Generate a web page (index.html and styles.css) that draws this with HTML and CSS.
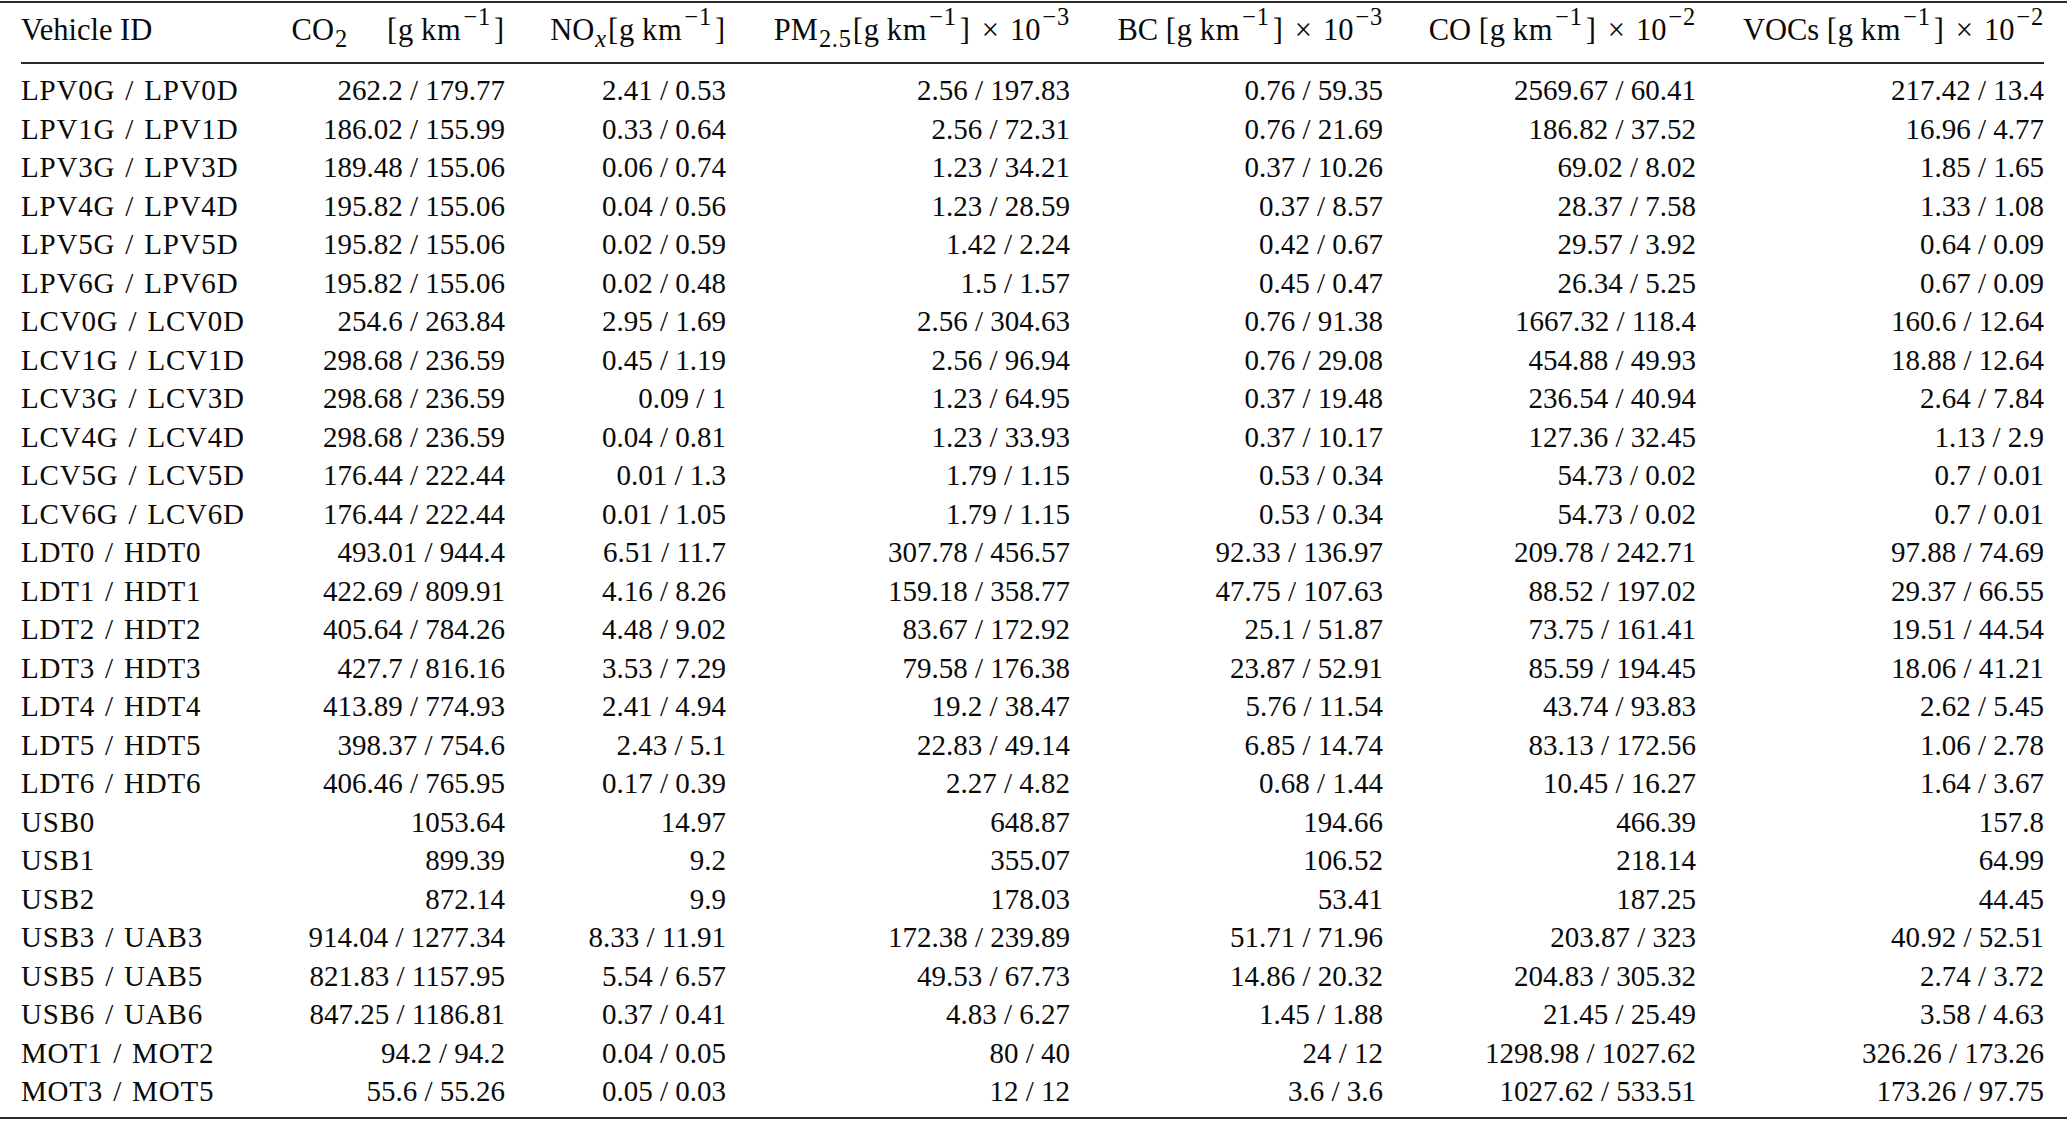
FILE: index.html
```html
<!DOCTYPE html>
<html>
<head>
<meta charset="utf-8">
<link rel="stylesheet" href="styles.css">
</head>
<body>
<div class="sheet">
<table class="emissions">
<colgroup>
<col class="c-id"><col class="c-co2"><col class="c-nox"><col class="c-pm"><col class="c-bc"><col class="c-co"><col class="c-voc">
</colgroup>
<thead>
<tr>
<th class="lft">Vehicle ID</th>
<th>CO<sub>2</sub><span class="gap"></span><span class="u">[g&#8201;km<sup>&minus;1</sup>]</span></th>
<th>NO<sub><i>x</i></sub><span class="u">[g&#8201;km<sup>&minus;1</sup>]</span></th>
<th>PM<sub>2.5</sub><span class="u">[g&#8201;km<sup>&minus;1</sup>]</span><span class="x">&times;</span>10<sup class="end">&minus;3</sup></th>
<th>BC <span class="u">[g&#8201;km<sup>&minus;1</sup>]</span><span class="x">&times;</span>10<sup class="end">&minus;3</sup></th>
<th>CO <span class="u">[g&#8201;km<sup>&minus;1</sup>]</span><span class="x">&times;</span>10<sup class="end">&minus;2</sup></th>
<th>VOCs <span class="u">[g&#8201;km<sup>&minus;1</sup>]</span><span class="x">&times;</span>10<sup class="end">&minus;2</sup></th>
</tr>
</thead>
<tbody>
<tr class="first"><td class="lft">LPV0G / LPV0D</td><td>262.2 / 179.77</td><td>2.41 / 0.53</td><td>2.56 / 197.83</td><td>0.76 / 59.35</td><td>2569.67 / 60.41</td><td>217.42 / 13.4</td></tr>
<tr><td class="lft">LPV1G / LPV1D</td><td>186.02 / 155.99</td><td>0.33 / 0.64</td><td>2.56 / 72.31</td><td>0.76 / 21.69</td><td>186.82 / 37.52</td><td>16.96 / 4.77</td></tr>
<tr><td class="lft">LPV3G / LPV3D</td><td>189.48 / 155.06</td><td>0.06 / 0.74</td><td>1.23 / 34.21</td><td>0.37 / 10.26</td><td>69.02 / 8.02</td><td>1.85 / 1.65</td></tr>
<tr><td class="lft">LPV4G / LPV4D</td><td>195.82 / 155.06</td><td>0.04 / 0.56</td><td>1.23 / 28.59</td><td>0.37 / 8.57</td><td>28.37 / 7.58</td><td>1.33 / 1.08</td></tr>
<tr><td class="lft">LPV5G / LPV5D</td><td>195.82 / 155.06</td><td>0.02 / 0.59</td><td>1.42 / 2.24</td><td>0.42 / 0.67</td><td>29.57 / 3.92</td><td>0.64 / 0.09</td></tr>
<tr><td class="lft">LPV6G / LPV6D</td><td>195.82 / 155.06</td><td>0.02 / 0.48</td><td>1.5 / 1.57</td><td>0.45 / 0.47</td><td>26.34 / 5.25</td><td>0.67 / 0.09</td></tr>
<tr><td class="lft">LCV0G / LCV0D</td><td>254.6 / 263.84</td><td>2.95 / 1.69</td><td>2.56 / 304.63</td><td>0.76 / 91.38</td><td>1667.32 / 118.4</td><td>160.6 / 12.64</td></tr>
<tr><td class="lft">LCV1G / LCV1D</td><td>298.68 / 236.59</td><td>0.45 / 1.19</td><td>2.56 / 96.94</td><td>0.76 / 29.08</td><td>454.88 / 49.93</td><td>18.88 / 12.64</td></tr>
<tr><td class="lft">LCV3G / LCV3D</td><td>298.68 / 236.59</td><td>0.09 / 1</td><td>1.23 / 64.95</td><td>0.37 / 19.48</td><td>236.54 / 40.94</td><td>2.64 / 7.84</td></tr>
<tr><td class="lft">LCV4G / LCV4D</td><td>298.68 / 236.59</td><td>0.04 / 0.81</td><td>1.23 / 33.93</td><td>0.37 / 10.17</td><td>127.36 / 32.45</td><td>1.13 / 2.9</td></tr>
<tr><td class="lft">LCV5G / LCV5D</td><td>176.44 / 222.44</td><td>0.01 / 1.3</td><td>1.79 / 1.15</td><td>0.53 / 0.34</td><td>54.73 / 0.02</td><td>0.7 / 0.01</td></tr>
<tr><td class="lft">LCV6G / LCV6D</td><td>176.44 / 222.44</td><td>0.01 / 1.05</td><td>1.79 / 1.15</td><td>0.53 / 0.34</td><td>54.73 / 0.02</td><td>0.7 / 0.01</td></tr>
<tr><td class="lft">LDT0 / HDT0</td><td>493.01 / 944.4</td><td>6.51 / 11.7</td><td>307.78 / 456.57</td><td>92.33 / 136.97</td><td>209.78 / 242.71</td><td>97.88 / 74.69</td></tr>
<tr><td class="lft">LDT1 / HDT1</td><td>422.69 / 809.91</td><td>4.16 / 8.26</td><td>159.18 / 358.77</td><td>47.75 / 107.63</td><td>88.52 / 197.02</td><td>29.37 / 66.55</td></tr>
<tr><td class="lft">LDT2 / HDT2</td><td>405.64 / 784.26</td><td>4.48 / 9.02</td><td>83.67 / 172.92</td><td>25.1 / 51.87</td><td>73.75 / 161.41</td><td>19.51 / 44.54</td></tr>
<tr><td class="lft">LDT3 / HDT3</td><td>427.7 / 816.16</td><td>3.53 / 7.29</td><td>79.58 / 176.38</td><td>23.87 / 52.91</td><td>85.59 / 194.45</td><td>18.06 / 41.21</td></tr>
<tr><td class="lft">LDT4 / HDT4</td><td>413.89 / 774.93</td><td>2.41 / 4.94</td><td>19.2 / 38.47</td><td>5.76 / 11.54</td><td>43.74 / 93.83</td><td>2.62 / 5.45</td></tr>
<tr><td class="lft">LDT5 / HDT5</td><td>398.37 / 754.6</td><td>2.43 / 5.1</td><td>22.83 / 49.14</td><td>6.85 / 14.74</td><td>83.13 / 172.56</td><td>1.06 / 2.78</td></tr>
<tr><td class="lft">LDT6 / HDT6</td><td>406.46 / 765.95</td><td>0.17 / 0.39</td><td>2.27 / 4.82</td><td>0.68 / 1.44</td><td>10.45 / 16.27</td><td>1.64 / 3.67</td></tr>
<tr><td class="lft">USB0</td><td>1053.64</td><td>14.97</td><td>648.87</td><td>194.66</td><td>466.39</td><td>157.8</td></tr>
<tr><td class="lft">USB1</td><td>899.39</td><td>9.2</td><td>355.07</td><td>106.52</td><td>218.14</td><td>64.99</td></tr>
<tr><td class="lft">USB2</td><td>872.14</td><td>9.9</td><td>178.03</td><td>53.41</td><td>187.25</td><td>44.45</td></tr>
<tr><td class="lft">USB3 / UAB3</td><td>914.04 / 1277.34</td><td>8.33 / 11.91</td><td>172.38 / 239.89</td><td>51.71 / 71.96</td><td>203.87 / 323</td><td>40.92 / 52.51</td></tr>
<tr><td class="lft">USB5 / UAB5</td><td>821.83 / 1157.95</td><td>5.54 / 6.57</td><td>49.53 / 67.73</td><td>14.86 / 20.32</td><td>204.83 / 305.32</td><td>2.74 / 3.72</td></tr>
<tr><td class="lft">USB6 / UAB6</td><td>847.25 / 1186.81</td><td>0.37 / 0.41</td><td>4.83 / 6.27</td><td>1.45 / 1.88</td><td>21.45 / 25.49</td><td>3.58 / 4.63</td></tr>
<tr><td class="lft">MOT1 / MOT2</td><td>94.2 / 94.2</td><td>0.04 / 0.05</td><td>80 / 40</td><td>24 / 12</td><td>1298.98 / 1027.62</td><td>326.26 / 173.26</td></tr>
<tr class="last"><td class="lft">MOT3 / MOT5</td><td>55.6 / 55.26</td><td>0.05 / 0.03</td><td>12 / 12</td><td>3.6 / 3.6</td><td>1027.62 / 533.51</td><td>173.26 / 97.75</td></tr>
</tbody>
</table>
</div>
</body>
</html>
```
FILE: styles.css
```css
html, body {
  margin: 0;
  padding: 0;
  background: #ffffff;
}

body {
  font-family: "Liberation Serif", "Times New Roman", serif;
  color: #0a0a0a;
}

.sheet {
  margin-top: 1px;
  width: 2067px;
  box-sizing: border-box;
  padding: 0 23px 0 21px;
  border-top: 2px solid #2a2a2a;
  border-bottom: 2px solid #2a2a2a;
}

.emissions {
  width: 2023px;
  table-layout: fixed;
  border-collapse: collapse;
  font-size: 29px;
}

.c-id { width: 239px; }
.c-co2 { width: 245px; }
.c-nox { width: 221px; }
.c-pm { width: 344px; }
.c-bc { width: 313px; }
.c-co { width: 313px; }
.c-voc { width: 348px; }

.emissions th,
.emissions td {
  padding: 0;
  text-align: right;
  white-space: nowrap;
  font-weight: normal;
}

.emissions .lft {
  text-align: left;
}

.emissions td.lft {
  letter-spacing: 0.8px;
  word-spacing: 2px;
}

.emissions thead th {
  font-size: 30.5px;
  height: 59px;
  line-height: 54px;
  padding-bottom: 5px;
  vertical-align: middle;
  border-bottom: 2px solid #2a2a2a;
  box-sizing: border-box;
}

.emissions tbody td {
  height: 38.5px;
  line-height: 38.5px;
  vertical-align: middle;
}

.emissions tbody tr.first td {
  padding-top: 7px;
}

.emissions tbody tr.last td {
  padding-bottom: 6px;
}

.emissions sub,
.emissions sup {
  font-size: 80%;
  line-height: 0;
  position: relative;
  vertical-align: baseline;
}

.emissions sub {
  top: 0.3em;
  padding: 0 1px 0 1px;
  letter-spacing: 0.8px;
}

.emissions sup {
  top: -0.62em;
  padding: 0 3px 0 2px;
  letter-spacing: 0.8px;
}

.emissions sup.end {
  padding-right: 0;
}

.u {
  letter-spacing: 0.8px;
}

.x {
  margin: 0 0.36em;
}

.gap {
  display: inline-block;
  width: 38px;
}
```
